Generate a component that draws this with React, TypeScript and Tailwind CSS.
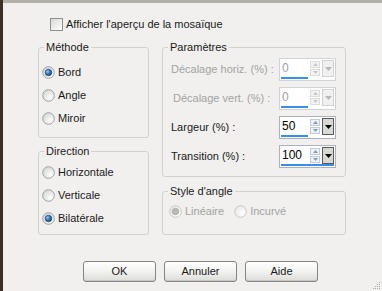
import type { ReactNode } from 'react';

function Radio({ checked, disabled }: { checked?: boolean; disabled?: boolean }) {
  const ring = disabled ? '#c8c8c4' : '#9aa3ab';
  return (
    <svg width="13" height="13" viewBox="0 0 13 13" className="shrink-0">
      <defs>
        <radialGradient id={`rf-${disabled ? 'd' : 'e'}`} cx="0.7" cy="0.7" r="0.8">
          <stop offset="0" stopColor="#ffffff" />
          <stop offset="1" stopColor={disabled ? '#e6e6e2' : '#d5d6d2'} />
        </radialGradient>
        <radialGradient id="dot-e" cx="0.35" cy="0.35" r="0.7">
          <stop offset="0" stopColor="#8fc3ef" />
          <stop offset="0.6" stopColor="#2a6fb0" />
          <stop offset="1" stopColor="#174a7c" />
        </radialGradient>
      </defs>
      <circle cx="6.5" cy="6.5" r="5.8" fill={`url(#rf-${disabled ? 'd' : 'e'})`} stroke={ring} strokeWidth="1" />
      {checked && (
        <circle cx="6.5" cy="6.5" r="3.3" fill={disabled ? '#b9b9b6' : 'url(#dot-e)'} stroke={disabled ? '#a5a5a2' : '#123e68'} strokeWidth="0.6" />
      )}
    </svg>
  );
}

function RadioItem({ label, checked, disabled }: { label: string; checked?: boolean; disabled?: boolean }) {
  return (
    <div className="flex items-center gap-[3px]">
      <Radio checked={checked} disabled={disabled} />
      <span className={disabled ? 'text-[#a3a3a0]' : 'text-[#1a1a1a]'}>{label}</span>
    </div>
  );
}

function Group({ title, className, children }: { title: string; className: string; children: ReactNode }) {
  return (
    <fieldset className={`rounded-[3px] border border-[#d3d2cb] p-0 ${className}`}>
      <legend className="ml-[5px] px-[2px] leading-[13px] text-[#1a1a1a]">{title}</legend>
      {children}
    </fieldset>
  );
}

function Spin({ value, disabled, bar }: { value: string; disabled?: boolean; bar: string }) {
  return (
    <div className={`flex h-[23px] w-[57px] flex-col border bg-white p-[1px] ${disabled ? 'border-[#d0d3d6]' : 'border-[#aab2bb]'}`}>
      <div className="flex h-[17px]">
        <div className={`flex-1 pl-[1px] text-[12px] leading-[17px] ${disabled ? 'text-[#a0a0a0]' : 'text-black'}`}>{value}</div>
        <div className="mr-[2px] flex w-[10px] flex-col gap-[1px] py-[1px]">
          <div className={`flex flex-1 items-center justify-center border ${disabled ? 'border-[#dcdcdc] bg-[#f3f3f1]' : 'border-[#c3ccd6] bg-[#eef1f5]'}`}>
            <svg width="5" height="3" viewBox="0 0 5 3"><path d="M0 3 L2.5 0 L5 3 Z" fill={disabled ? '#c5c9ce' : '#7f9cc0'} /></svg>
          </div>
          <div className={`flex flex-1 items-center justify-center border ${disabled ? 'border-[#dcdcdc] bg-[#f3f3f1]' : 'border-[#c3ccd6] bg-[#eef1f5]'}`}>
            <svg width="5" height="3" viewBox="0 0 5 3"><path d="M0 0 L5 0 L2.5 3 Z" fill={disabled ? '#c5c9ce' : '#7f9cc0'} /></svg>
          </div>
        </div>
        <div className={`flex w-[12px] items-center justify-center border ${disabled ? 'border-[#d2d2d0] bg-[#f0f0ee]' : 'border-[#5a5a5a] bg-[#d8d8d4]'}`}>
          <svg width="7" height="4" viewBox="0 0 7 4"><path d="M0 0 L7 0 L3.5 4 Z" fill={disabled ? '#b8b8b8' : '#000'} /></svg>
        </div>
      </div>
      <div className="mt-auto h-[3px] bg-[#3a8ee6]" style={{ width: bar }} />
    </div>
  );
}

function Row({ label, value, disabled, bar, indent }: { label: string; value: string; disabled?: boolean; bar: string; indent?: boolean }) {
  return (
    <div className="flex items-center">
      <span className={`w-[108px] ${indent ? 'pl-[2px]' : ''} ${disabled ? 'text-[#a3a3a0]' : 'text-[#1a1a1a]'}`}>{label}</span>
      <Spin value={value} disabled={disabled} bar={bar} />
    </div>
  );
}

function Button({ label }: { label: string }) {
  return (
    <button className="h-[21px] w-[73px] rounded-[3px] border border-[#858585] bg-gradient-to-b from-[#ffffff] via-[#f2f2f0] to-[#dcdcd8] text-[11px] text-[#1a1a1a] shadow-[inset_0_-1px_0_#c8c8c4]">
      {label}
    </button>
  );
}

export default function App() {
  return (
    <div className="relative flex h-[291px] w-[382px] flex-col overflow-hidden border-l-[3px] border-[#3d3024] bg-[#f1f0ee] font-['Liberation_Sans',Arial,sans-serif] text-[11px]">
      <div className="h-[3px] bg-[#b3afa9]" />

      <div className="ml-[47px] mt-[15px] flex h-[13px] items-center gap-[3px]">
        <div className="h-[13px] w-[13px] border border-[#8e8f8f] bg-gradient-to-br from-[#d9d9d4] to-[#ffffff]" />
        <span className="text-[#1a1a1a]">Afficher l'aperçu de la mosaïque</span>
      </div>

      <div className="ml-[35px] mt-[10px] flex gap-[13px]">
        <div className="flex w-[111px] flex-col gap-[7px]">
          <Group title="Méthode" className="h-[97px]">
            <div className="flex flex-col pl-[3px] pt-[7px]">
              <div className="flex h-[23px] items-center"><RadioItem label="Bord" checked /></div>
              <div className="flex h-[23px] items-center"><RadioItem label="Angle" /></div>
              <div className="flex h-[23px] items-center"><RadioItem label="Miroir" /></div>
            </div>
          </Group>
          <Group title="Direction" className="h-[90px]">
            <div className="flex flex-col pl-[3px] pt-[2px]">
              <div className="flex h-[24px] items-center"><RadioItem label="Horizontale" /></div>
              <div className="flex h-[23px] items-center"><RadioItem label="Verticale" /></div>
              <div className="flex h-[23px] items-center"><RadioItem label="Bilatérale" checked /></div>
            </div>
          </Group>
        </div>

        <div className="flex w-[184px] flex-col gap-[8px]">
          <Group title="Paramètres" className="h-[136px]">
            <div className="flex flex-col gap-[6px] pl-[8px] pt-[4px]">
              <Row label="Décalage horiz. (%) :" value="0" disabled bar="27px" />
              <Row label="Décalage vert. (%) :" value="0" disabled bar="27px" indent />
              <Row label="Largeur (%) :" value="50" bar="27px" />
              <Row label="Transition (%) :" value="100" bar="100%" />
            </div>
          </Group>
          <Group title="Style d'angle" className="h-[50px]">
            <div className="flex h-[23px] items-center pl-[6px] pt-[4px]">
              <RadioItem label="Linéaire" checked disabled />
              <div className="ml-[10px]"><RadioItem label="Incurvé" disabled /></div>
            </div>
          </Group>
        </div>
      </div>

      <div className="ml-[80px] mt-[26px] flex gap-[8px]">
        <Button label="OK" />
        <Button label="Annuler" />
        <Button label="Aide" />
      </div>

      <svg width="10" height="10" viewBox="0 0 10 10" className="absolute bottom-[1px] right-[1px]">
        {[[8, 2], [6, 4], [8, 4], [4, 6], [6, 6], [8, 6], [2, 8], [4, 8], [6, 8], [8, 8]].map(([x, y], i) => (
          <rect key={i} x={x} y={y} width="1" height="1" fill="#a8a8a4" />
        ))}
      </svg>
    </div>
  );
}
